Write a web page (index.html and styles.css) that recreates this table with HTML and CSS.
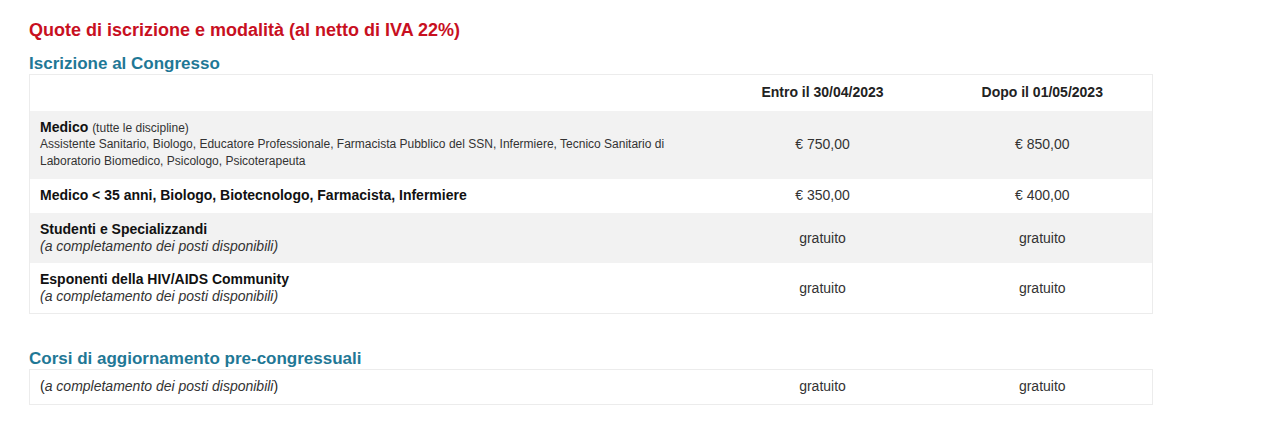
FILE: index.html
```html
<!DOCTYPE html>
<html lang="it">
<head>
<meta charset="utf-8">
<title>Quote di iscrizione</title>
<link rel="stylesheet" href="styles.css">
</head>
<body>
<div class="page">
  <h2 class="title">Quote di iscrizione e modalità (al netto di IVA 22%)</h2>
  <h3 class="section">Iscrizione al Congresso</h3>
  <table class="fees">
    <colgroup><col><col class="c"><col class="c"></colgroup>
    <thead>
      <tr><th></th><th>Entro il 30/04/2023</th><th>Dopo il 01/05/2023</th></tr>
    </thead>
    <tbody>
      <tr class="alt">
        <td class="label"><b>Medico</b> <span class="small">(tutte le discipline)</span><div class="small-block">Assistente Sanitario, Biologo, Educatore Professionale, Farmacista Pubblico del SSN, Infermiere, Tecnico Sanitario di Laboratorio Biomedico, Psicologo, Psicoterapeuta</div></td>
        <td>€ 750,00</td><td>€ 850,00</td>
      </tr>
      <tr>
        <td class="label"><b>Medico &lt; 35 anni, Biologo, Biotecnologo, Farmacista, Infermiere</b></td>
        <td>€ 350,00</td><td>€ 400,00</td>
      </tr>
      <tr class="alt two">
        <td class="label"><b>Studenti e Specializzandi</b><br><i>(a completamento dei posti disponibili)</i></td>
        <td>gratuito</td><td>gratuito</td>
      </tr>
      <tr class="two">
        <td class="label"><b>Esponenti della HIV/AIDS Community</b><br><i>(a completamento dei posti disponibili)</i></td>
        <td>gratuito</td><td>gratuito</td>
      </tr>
    </tbody>
  </table>
  <h3 class="section second">Corsi di aggiornamento pre-congressuali</h3>
  <table class="fees">
    <colgroup><col><col class="c"><col class="c"></colgroup>
    <tbody>
      <tr>
        <td class="label">(<i>a completamento dei posti disponibili</i>)</td>
        <td>gratuito</td><td>gratuito</td>
      </tr>
    </tbody>
  </table>
</div>
</body>
</html>
```
FILE: styles.css
```css
* { box-sizing: border-box; }
body {
  margin: 0;
  background: #fff;
  font-family: "Liberation Sans", Arial, sans-serif;
  color: #222;
}
.page {
  padding: 19px 0 0 29px;
  width: 1153px;
}
.title {
  margin: 0;
  font-size: 18px;
  line-height: 22px;
  font-weight: bold;
  color: #c8101f;
}
.section {
  margin: 13px 0 0;
  font-size: 17px;
  line-height: 20px;
  font-weight: bold;
  color: #1f7896;
}
.section.second {
  margin: 35px 0 0;
}
.fees {
  width: 1124px;
  border-collapse: collapse;
  table-layout: fixed;
  border: 1px solid #ececec;
  font-size: 14px;
  line-height: 17px;
}
.fees col.c { width: 220px; }
.fees th {
  font-weight: bold;
  padding: 9px 10px 10px;
  text-align: center;
  color: #222;
}
.fees td {
  padding: 8px 10px 9px;
  text-align: center;
  vertical-align: middle;
  color: #333;
}
.fees tr.two td { padding-bottom: 8px; }
.fees td.label {
  text-align: left;
  color: #222;
}
.fees tr.alt td { background: #f2f2f2; }
.fees b { font-weight: bold; color: #111; }
.fees i { font-style: italic; color: #333; }
.small { font-size: 12px; line-height: 1; color: #333; }
.small-block { font-size: 12px; line-height: 17px; color: #333; }
```
